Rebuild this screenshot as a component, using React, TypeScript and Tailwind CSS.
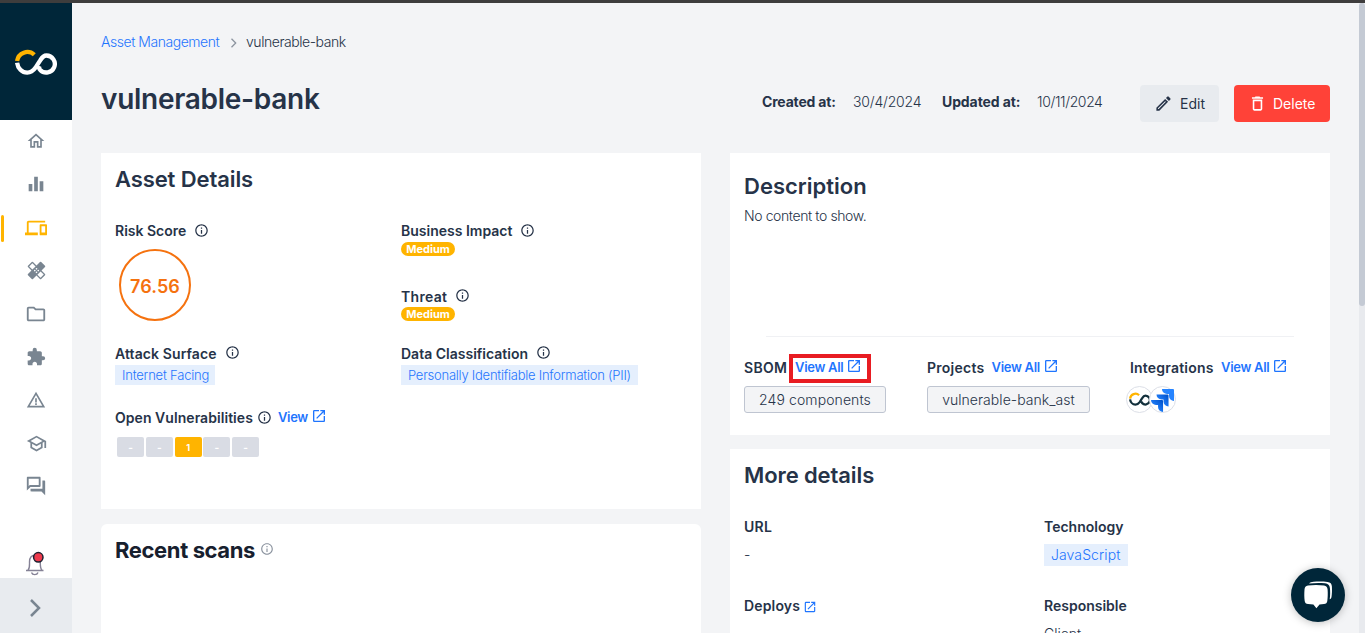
import type { ReactNode } from "react";
import {
  MdDeleteOutline,
  MdEqualizer,
  MdExtension,
  MdHealing,
  MdOpenInNew,
  MdOutlineDevices,
  MdOutlineEdit,
  MdOutlineFolder,
  MdOutlineForum,
  MdOutlineHome,
  MdOutlineInfo,
  MdOutlineSchool,
  MdWarningAmber,
} from "react-icons/md";

const navItems = [
  { key: "home", icon: <MdOutlineHome size={20} className="mb-[2px]" /> },
  { key: "dashboard", icon: <MdEqualizer size={22} className="mb-[2px]" /> },
  { key: "assets", icon: <MdOutlineDevices size={22} />, active: true },
  { key: "fixes", icon: <MdHealing size={21} /> },
  { key: "projects", icon: <MdOutlineFolder size={22} /> },
  { key: "integrations", icon: <MdExtension size={20} /> },
  { key: "alerts", icon: <MdWarningAmber size={20} /> },
  { key: "learning", icon: <MdOutlineSchool size={21} /> },
  { key: "forum", icon: <MdOutlineForum size={22} /> },
];

function BrandMark({ className, base }: { className: string; base: string }) {
  return (
    <svg viewBox="0 0 42 26" className={className} fill="none" strokeWidth="4.3">
      <path d="M2.1 12.1A10.3 10.400 0 0 1 19.300 5.800" stroke="#ffb400" />
      <path
        d="M2.1 13.7C2.7 19.2 7 23.6 12.2 23.6C16 23.6 18.4 21.6 20.4 18.8L25.2 11.4C27 8.4 29 6.500 31.4 6.500A8.500 8.500 0 1 1 25.2 20.9C24.2 19.8 23.8 18.6 24.4 17"
        stroke={base}
      />
    </svg>
  );
}

function Sidebar() {
  return (
    <aside className="flex w-[72px] shrink-0 flex-col bg-white">
      <div className="flex h-[117px] items-center justify-center bg-[#002639]">
        <BrandMark className="h-[26px] w-[42px]" base="#fff" />
      </div>
      <nav className="flex flex-col text-[#798591]">
        {navItems.map((item) => (
          <a
            key={item.key}
            className={
              item.active
                ? "relative flex h-[43.1px] items-center justify-center text-[#ffb400]"
                : "relative flex h-[43.1px] items-center justify-center"
            }
          >
            {item.active && (
              <span className="absolute left-px top-[9px] h-[27px] w-[3px] rounded-full bg-[#ffb400]" />
            )}
            {item.icon}
          </a>
        ))}
      </nav>
      <div className="mt-auto flex h-[30px] pl-[25px]">
        <svg viewBox="0 0 22 30" className="h-[30px] w-[22px]" fill="none">
          <path
            d="M1 22.5H18.5M3 22.3C5 20 4.5 17 4.5 14C4.5 10 6.5 7.2 10 7.2C13.5 7.2 15.3 10 15.3 14C15.3 17 15 20 17 22.3"
            stroke="#858296"
            strokeWidth="1.4"
          />
          <path d="M6.5 24.500C7.5 27.3 12 27.3 13 24.5" stroke="#858296" strokeWidth="1.4" />
          <circle cx="13.3" cy="9.3" r="4.7" fill="#ef3a4c" stroke="#1f2030" strokeWidth="1.5" />
        </svg>
      </div>
      <div className="flex h-[55px] items-center bg-[#e8ebef] pl-[29px] pt-[4px]">
        <svg viewBox="0 0 12 18" className="h-[18px] w-3" fill="none" stroke="#798591" strokeWidth="2.5">
          <path d="M2 1L10 9L2 17" />
        </svg>
      </div>
    </aside>
  );
}

function Info({ className = "mb-[2px]" }: { className?: string }) {
  return <MdOutlineInfo size={15} className={`ml-2 shrink-0 ${className}`} />;
}

function ViewLink({ children, className }: { children: ReactNode; className: string }) {
  return (
    <a
      className={`flex items-center text-[13px] font-semibold tracking-[-0.3px] text-[#1f75fe] ${className}`}
    >
      <span>{children}</span>
      <MdOpenInNew size={16} className="mb-[2px] ml-[3px]" />
    </a>
  );
}

function Label({ children, className = "" }: { children: ReactNode; className?: string }) {
  return <div className={`flex h-5 items-center text-sm font-semibold ${className}`}>{children}</div>;
}

function Tag({ children, className = "" }: { children: ReactNode; className?: string }) {
  return (
    <span className={`flex items-center bg-[#e5effd] pl-[7px] font-light text-[#1f75fe] ${className}`}>
      {children}
    </span>
  );
}

function Badge() {
  return (
    <span className="flex h-[14px] w-[54px] items-center justify-center rounded-full bg-[#ffb400] text-[11px] font-bold text-white">
      Medium
    </span>
  );
}

function AssetDetails() {
  const counts = ["-", "-", "1", "-", "-"];
  return (
    <section className="h-[356px] bg-white pl-[14px] pt-[14px]">
      <h2 className="h-6 text-[22px] leading-6 font-semibold tracking-[-0.1px]">Asset Details</h2>
      <div className="mt-[30px] flex">
        <div className="w-[286px]">
          <Label>
            <span>Risk Score</span>
            <Info />
          </Label>
          <div className="ml-[4px] mt-[8px] flex h-[72px] w-[72px] items-center justify-center rounded-full border-2 border-[#f5720f] pt-[4px] text-lg font-semibold tracking-[0.1px] text-[#f5720f]">
            76.56
          </div>
          <Label className="mt-[23px] tracking-[0.1px]">
            <span>Attack Surface</span>
            <Info className="mb-[4px]" />
          </Label>
          <Tag className="mt-[1px] h-5 w-[100px] pt-px text-[13px] tracking-[-0.2px]">Internet Facing</Tag>
          <Label className="mt-[23px] tracking-[0.05px]">
            <span>Open Vulnerabilities</span>
            <MdOutlineInfo size={15} className="mb-[2px] ml-[4px]" />
            <ViewLink className="mb-[2px] ml-[6px]">View</ViewLink>
          </Label>
          <div className="ml-[2px] mt-[9px] flex gap-[1.8px]">
            {counts.map((count, i) => (
              <span
                key={i}
                className={
                  count === "1"
                    ? "flex h-5 w-[27px] items-center justify-center rounded-xs bg-[#ffb400] pt-px text-[9px] font-bold text-white"
                    : "flex h-5 w-[27px] items-center justify-center rounded-xs bg-[#d9dce4] pt-px text-[10px] font-bold text-white"
                }
              >
                {count}
              </span>
            ))}
          </div>
        </div>
        <div>
          <Label>
            <span>Business Impact</span>
            <Info />
          </Label>
          <div className="mt-[1px]">
            <Badge />
          </div>
          <Label className="mt-[31px] tracking-[0.3px]">
            <span>Threat</span>
            <Info className="mb-[4px]" />
          </Label>
          <Badge />
          <Label className="mt-[23px]">
            <span>Data Classification</span>
            <Info className="mb-[4px]" />
          </Label>
          <Tag className="mt-[1px] h-5 w-[237px] pt-px text-[13px] tracking-[-0.24px]">
            Personally Identifiable Information (PII)
          </Tag>
        </div>
      </div>
    </section>
  );
}

function RecentScans() {
  return (
    <section className="mt-[15px] h-[120px] rounded-t-md bg-white pl-[14px] pt-[14px]">
      <div className="flex h-6 items-center text-[#17202e]">
        <h2 className="text-[22px] font-bold tracking-[-0.38px]">Recent scans</h2>
        <MdOutlineInfo size={14} className="mb-[2px] ml-[5px] text-[#8b939f]" />
      </div>
    </section>
  );
}

function Chip({ children, className }: { children: ReactNode; className: string }) {
  return (
    <span
      className={`flex h-[27px] items-center justify-center rounded-[3px] border border-[#bfc5d1] bg-[#f3f4f6] text-sm font-light ${className}`}
    >
      {children}
    </span>
  );
}

function JiraMark() {
  return (
    <svg viewBox="0 0 24 24" className="mt-[2px] h-[23px] w-[23px] shrink-0">
      <defs>
        <linearGradient id="jira-mid" x1="1" y1="0" x2="0.3" y2="0.7">
          <stop offset="0.1" stopColor="#0052cc" />
          <stop offset="1" stopColor="#2684ff" />
        </linearGradient>
      </defs>
      <path
        fill="#2684ff"
        d="M23.013 0H11.455a5.215 5.215 0 0 0 5.215 5.215h2.129v2.057A5.215 5.215 0 0 0 24 12.483V1.005A1.001 1.001 0 0 0 23.013 0Z"
      />
      <path
        fill="url(#jira-mid)"
        d="M17.294 5.757H5.736a5.215 5.215 0 0 0 5.215 5.214h2.129v2.058a5.218 5.218 0 0 0 5.215 5.214V6.758a1.001 1.001 0 0 0-1.001-1.001z"
      />
      <path
        fill="url(#jira-mid)"
        d="M11.571 11.513H0a5.218 5.218 0 0 0 5.232 5.215h2.13v2.057A5.215 5.215 0 0 0 12.575 24V12.518a1.005 1.005 0 0 0-1.005-1.005z"
      />
    </svg>
  );
}

function Description() {
  return (
    <section className="h-[282px] bg-white pl-[14px] pt-[21px]">
      <h2 className="h-6 text-[22px] leading-6 font-semibold">Description</h2>
      <p className="mt-[8px] h-5 text-sm leading-5 font-light tracking-[-0.4px]">No content to show.</p>
      <hr className="ml-[22px] mt-[110px] w-[528px] border-[#f0f1f4]" />
      <div className="mt-[21px] flex">
        <div className="w-[183px]">
          <Label>
            <span className="w-[45px] tracking-[0.3px]">SBOM</span>
            <span className="relative">
              <ViewLink className="mb-[2px] ml-[6px]">View All</ViewLink>
              <span className="absolute -top-[4px] left-0 h-[29px] w-[82px] border-4 border-[#e81c22]" />
            </span>
          </Label>
          <Chip className="mt-[8px] w-[142px] tracking-[0.1px]">249 components</Chip>
        </div>
        <div className="w-[203px]">
          <Label>
            <span className="w-[64.5px] tracking-[0.25px]">Projects</span>
            <ViewLink className="mb-[2px]">View All</ViewLink>
          </Label>
          <Chip className="mt-[8px] w-[163px] tracking-[0.05px]">vulnerable-bank_ast</Chip>
        </div>
        <div>
          <Label>
            <span className="w-[91px] tracking-[0.2px]">Integrations</span>
            <ViewLink className="mb-[2px]">View All</ViewLink>
          </Label>
          <div className="-ml-[4px] mt-[8px] flex">
            <span className="flex h-[27px] w-[27px] items-center justify-center rounded-full border border-[#dcdfe7]">
              <BrandMark className="mb-px h-[14px] w-[22px]" base="#12303c" />
            </span>
            <span className="-ml-[4px] flex h-[27px] w-[27px] items-center justify-center rounded-full border border-[#dcdfe7] bg-white">
              <JiraMark />
            </span>
          </div>
        </div>
      </div>
    </section>
  );
}

function MoreDetails() {
  return (
    <section className="mt-[14px] h-[240px] bg-white pl-[14px] pt-[14px]">
      <h2 className="h-6 text-[22px] leading-6 font-semibold tracking-[-0.1px]">More details</h2>
      <div className="mt-[30px] grid grid-cols-[300px_1fr]">
        <div>
          <Label className="tracking-[0.3px]">URL</Label>
          <div className="mt-[8px] h-5 text-sm leading-5 font-light">-</div>
          <Label className="mt-[31px]">
            <span className="tracking-[0.15px]">Deploys</span>
            <MdOpenInNew size={14} className="mt-px ml-[3px] text-[#1f75fe]" />
          </Label>
        </div>
        <div>
          <Label>Technology</Label>
          <Tag className="mt-[7px] h-[22px] w-[84px] text-sm tracking-[0.1px]">JavaScript</Tag>
          <Label className="mt-[30px]">Responsible</Label>
          <div className="mt-[8px] h-5 text-sm leading-5 font-light">Client</div>
        </div>
      </div>
    </section>
  );
}

function PageHeader() {
  return (
    <header className="flex h-[150px] w-[1229px] flex-col pt-[29px]">
      <div className="flex h-5 items-center text-sm font-light">
        <a className="w-[129px] tracking-[-0.46px] text-[#1f75fe]">Asset Management</a>
        <svg viewBox="0 0 7 10" className="mt-[2px] h-[10px] w-[7px]" fill="none" stroke="#8c949f" strokeWidth="1.3">
          <path d="M1.5 0.7L5.7 5L1.5 9.3" />
        </svg>
        <span className="ml-[9px] tracking-[-0.45px]">vulnerable-bank</span>
      </div>
      <div className="mt-[30px] flex h-[43px] items-center">
        <h1 className="mb-[10px] w-[661px] text-[28px] font-semibold tracking-[-0.28px]">vulnerable-bank</h1>
        <div className="mb-[3px] flex h-5 w-[378px] items-center text-sm">
          <span className="w-[91px] font-bold tracking-[-0.18px]">Created at:</span>
          <span className="w-[89px] font-light tracking-[-0.2px]">30/4/2024</span>
          <span className="w-[95px] font-bold tracking-[-0.1px]">Updated at:</span>
          <span className="font-light tracking-[-0.38px]">10/11/2024</span>
        </div>
        <button className="flex h-[37px] w-[79px] items-center rounded bg-[#e8ebef] pl-[14px] text-sm font-normal">
          <MdOutlineEdit size={19} />
          <span className="ml-[7px]">Edit</span>
        </button>
        <button className="ml-[15px] flex h-[37px] w-[96px] items-center rounded bg-[#ff4238] pl-[14px] text-sm text-white">
          <MdDeleteOutline size={19} />
          <span className="ml-[6px]">Delete</span>
        </button>
      </div>
    </header>
  );
}

function ChatButton() {
  return (
    <button className="absolute left-[1291px] top-[568px] h-[54px] w-[54px] rounded-full bg-[#002639] shadow-[0_1px_8px_rgba(0,0,0,0.25)]">
      <svg viewBox="0 0 54 54" className="h-[54px] w-[54px]" fill="#fff">
        <path d="M17 17.5C22 16.7 28 16.7 33 17.5C35.3 17.9 36.4 19 36.6 21.5C36.9 25.5 36.8 29.5 36.3 33C36 35 35 35.9 33 36.1L28.5 36.5L25.4 40.2L22.4 36.5L17 36.1C15 35.9 14 35 13.7 33C13.2 29.5 13.2 25.5 13.5 21.5C13.7 19 14.7 17.9 17 17.5Z" />
        <path d="M18 15.6C19 14 20.5 13.9 22.5 13.7C27 13.3 32 13.3 36.5 13.9C39.5 14.3 40.7 15.5 40.9 18.5C41.1 22 41 26 40.5 29C40.3 30.3 39.7 31 38.7 31.3C39.3 27.5 39.3 23.5 38.9 20C38.5 17 37.2 15.7 34 15.3C28.5 14.7 23 14.9 18 15.6Z" />
      </svg>
    </button>
  );
}

export default function App() {
  return (
    <div className="relative flex h-[633px] w-[1365px] flex-col overflow-hidden bg-[#f3f4f6] font-['Inter',sans-serif] text-[#263348]">
      <div className="h-[3px] shrink-0 bg-[#3e3d3d]" />
      <div className="flex h-[630px]">
        <Sidebar />
        <main className="h-[630px] w-[1287px] overflow-hidden pl-[29px]">
          <PageHeader />
          <div className="grid grid-cols-[600px_600px] gap-x-[29px]">
            <div>
              <AssetDetails />
              <RecentScans />
            </div>
            <div>
              <Description />
              <MoreDetails />
            </div>
          </div>
        </main>
        <div className="h-[630px] w-[6px] bg-[#e8eaee]">
          <div className="h-[303px] rounded-[3px] bg-[#c4cad4]" />
        </div>
      </div>
      <ChatButton />
    </div>
  );
}
